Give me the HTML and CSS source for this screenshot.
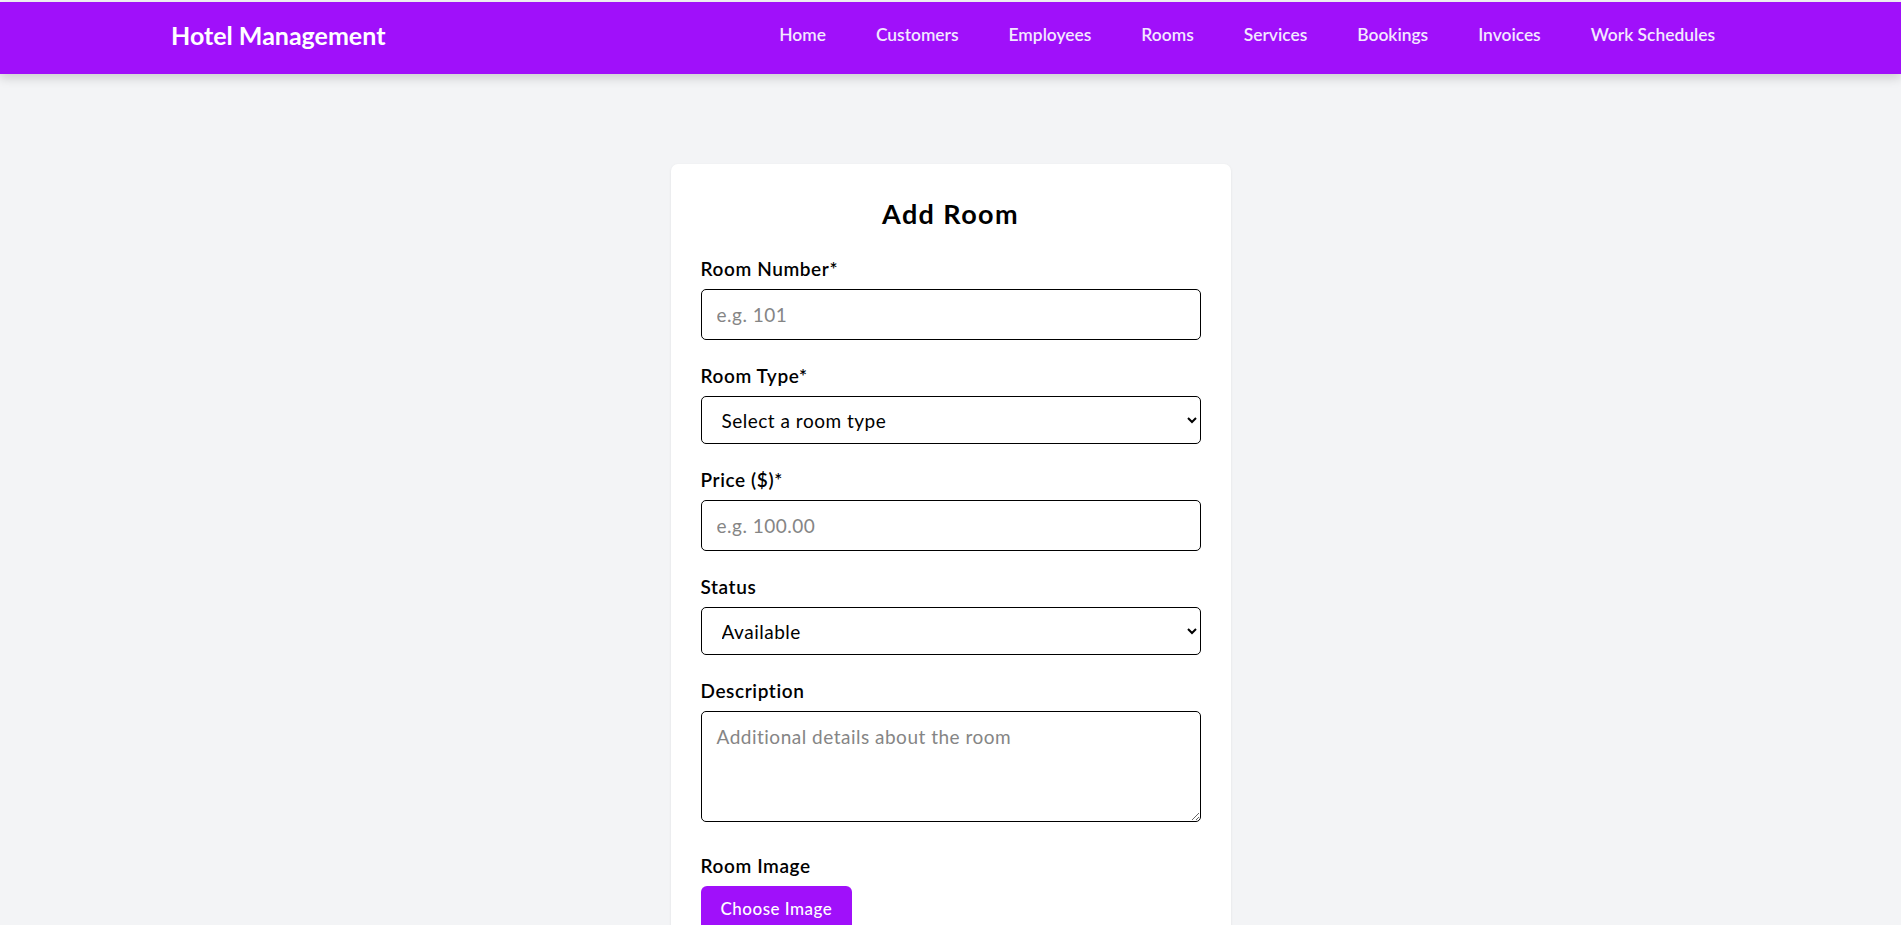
FILE: index.html
```html
<!DOCTYPE html>
<html lang="en">
<head>
<meta charset="utf-8">
<title>Hotel Management - Add Room</title>
<link rel="stylesheet" href="styles.css">
</head>
<body>
<header class="navbar">
  <div class="nav-inner">
    <a class="brand" href="#">Hotel Management</a>
    <nav class="nav-links">
      <a href="#">Home</a>
      <a href="#">Customers</a>
      <a href="#">Employees</a>
      <a href="#">Rooms</a>
      <a href="#">Services</a>
      <a href="#">Bookings</a>
      <a href="#">Invoices</a>
      <a href="#">Work Schedules</a>
    </nav>
  </div>
</header>
<main class="main">
  <form class="card">
    <h2 class="card-title">Add Room</h2>
    <div class="field">
      <label class="label" for="number">Room Number*</label>
      <input class="control input" id="number" type="text" placeholder="e.g. 101">
    </div>
    <div class="field">
      <label class="label" for="type">Room Type*</label>
      <select class="control select" id="type">
        <option>Select a room type</option>
        <option>Single</option>
        <option>Double</option>
        <option>Suite</option>
      </select>
    </div>
    <div class="field">
      <label class="label" for="price">Price ($)*</label>
      <input class="control input" id="price" type="text" placeholder="e.g. 100.00">
    </div>
    <div class="field">
      <label class="label" for="status">Status</label>
      <select class="control select" id="status">
        <option>Available</option>
        <option>Occupied</option>
        <option>Maintenance</option>
      </select>
    </div>
    <div class="field field-wide">
      <label class="label" for="desc">Description</label>
      <textarea class="control textarea" id="desc" placeholder="Additional details about the room"></textarea>
    </div>
    <div class="field">
      <span class="label">Room Image</span>
      <label class="upload-btn">Choose Image<input type="file" class="file-input"></label>
    </div>
  </form>
</main>
</body>
</html>
```

FILE: styles.css
```css
html {
  scrollbar-width: none;
  background: #fff;
}
* {
  box-sizing: border-box;
}
body {
  margin: 0 3px 0 0;
  padding-top: 2px;
  background: #f3f4f6;
  font-family: Lato, "Open Sans", sans-serif;
  color: #000;
}
a {
  text-decoration: none;
  color: inherit;
}
.navbar {
  background: #a010fa;
  height: 72px;
  box-shadow: 0 4px 10px rgba(0, 0, 0, 0.16);
}
.nav-inner {
  height: 100%;
  display: flex;
  align-items: center;
  justify-content: space-between;
  padding: 17px 186px 23px 171px;
}
.brand {
  color: #fff;
  font-size: 25px;
  line-height: 32px;
  font-weight: 700;
}
.nav-links {
  display: flex;
  gap: 50px;
}
.nav-links a {
  color: #f3e8ff;
  font-size: 17.4px;
  line-height: 24px;
  font-weight: 600;
}
.main {
  padding-top: 90px;
}
.card {
  width: 560px;
  margin: 0 auto;
  background: #fff;
  border-radius: 7px;
  padding: 34px 30px 30px;
  box-shadow: 0 1px 3px rgba(0, 0, 0, 0.08);
}
.card-title {
  margin: 0 0 25px;
  text-align: center;
  font-size: 27px;
  line-height: 32px;
  font-weight: 700;
  letter-spacing: 1.4px;
}
.field {
  margin-bottom: 22px;
}
.field-wide {
  margin-bottom: 30px;
}
.label {
  display: block;
  font-size: 19px;
  line-height: 28px;
  font-weight: 600;
  letter-spacing: 0.6px;
  margin-bottom: 6px;
}
.control {
  display: block;
  width: 100%;
  border: 1px solid #000;
  border-radius: 5px;
  background: #fff;
  font-family: inherit;
  font-size: 19px;
  letter-spacing: 0.5px;
  color: #000;
  padding: 0 15px;
}
.control::placeholder {
  color: #858585;
}
.input {
  height: 51px;
}
.select {
  height: 48px;
  padding-left: 16px;
}
.textarea {
  height: 111px;
  padding-top: 13px;
  resize: vertical;
}
.upload-btn {
  display: inline-block;
  background: #a010fa;
  color: #fff;
  font-size: 17px;
  line-height: 24px;
  font-weight: 500;
  letter-spacing: 0.5px;
  padding: 11px 20px;
  border-radius: 6px;
  cursor: pointer;
}
.file-input {
  display: none;
}
```
